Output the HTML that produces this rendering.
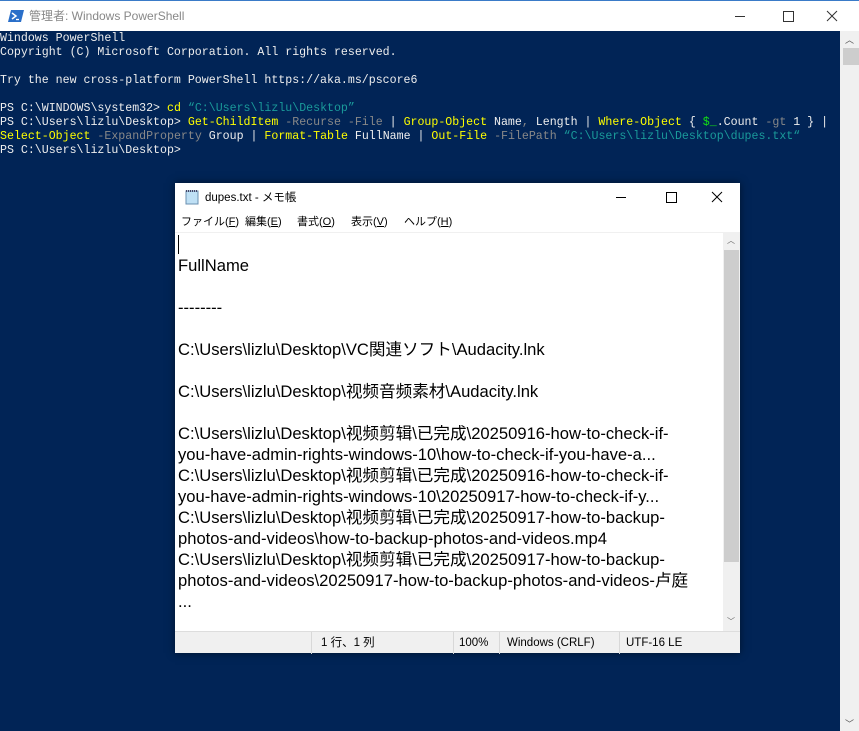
<!DOCTYPE html>
<html><head><meta charset="utf-8"><style>
*{margin:0;padding:0;box-sizing:border-box}
body{width:859px;height:731px;overflow:hidden;background:#012456;position:relative;font-family:"Liberation Sans","Noto Sans CJK JP",sans-serif}
#tb{position:absolute;left:0;top:0;width:859px;height:31px;background:#fff;border-top:1px solid #3a7bc8}
#tb .t{position:absolute;left:29px;top:8px;font-size:12px;line-height:15px;color:#888;white-space:nowrap}
#con{position:absolute;left:0;top:31px;width:840px;height:700px;font-family:"Liberation Mono","Noto Sans CJK JP",monospace;font-size:11.6px;line-height:14px;color:#eee;white-space:pre;padding-top:1px}
.y{color:#ffff00}.g{color:#888}.c{color:#1a9a9a}.gr{color:#13e013}
#sb{position:absolute;left:840px;top:31px;width:19px;height:700px;background:#f0f0f0}
#np{position:absolute;left:175px;top:183px;width:565px;height:470px;background:#fff;box-shadow:0 0 8px rgba(0,0,0,.5)}
#np .tt{position:absolute;left:30px;top:8px;font-size:11.5px;line-height:14px;color:#000;white-space:nowrap}
#menu{position:absolute;left:0;top:28px;width:565px;height:21px;font-size:11px;color:#000;white-space:nowrap}
#menu span{position:absolute;top:5px;line-height:13px}
#txt{position:absolute;left:0;top:49px;width:548px;height:399px;background:#fff;border-top:1px solid #f0f0f0;font-size:16.6px;line-height:21px;color:#000;padding-left:3px;padding-top:1px;white-space:pre;overflow:hidden}
#vs{position:absolute;left:548px;top:49px;width:17px;height:399px;background:#f0f0f0}
#st{position:absolute;left:0;top:448px;width:565px;height:22px;background:#f0f0f0;border-top:1px solid #ddd;font-size:11.5px;color:#000;white-space:nowrap}
#st span{position:absolute;top:4px;line-height:14px;height:14px}
#st i{position:absolute;top:0;width:1px;height:22px;background:#d8d8d8}
</style></head><body>
<div id="tb">
<svg style="position:absolute;left:8px;top:8px" width="16" height="14"><polygon points="3,1 16,1 13,13 0,13" fill="#2a6fc9"/><path d="M4,4 L8,7 L4,10" stroke="#fff" stroke-width="1.5" fill="none"/><path d="M8,10.5 H11" stroke="#fff" stroke-width="1.3"/></svg>
<span class="t">管理者: Windows PowerShell</span>
<svg style="position:absolute;left:735px;top:8px" width="110" height="16"><path d="M0,7.5 H10" stroke="#333"/><rect x="48.5" y="2.5" width="10" height="10" stroke="#333" fill="none"/><path d="M92,2 L102,12 M102,2 L92,12" stroke="#333"/></svg>
</div>
<div id="con">Windows PowerShell
Copyright (C) Microsoft Corporation. All rights reserved.

Try the new cross-platform PowerShell https://aka.ms/pscore6

PS C:\WINDOWS\system32&gt; <span class="y">cd</span> <span class="c">“C:\Users\lizlu\Desktop”</span>
PS C:\Users\lizlu\Desktop&gt; <span class="y">Get-ChildItem</span> <span class="g">-Recurse -File</span> | <span class="y">Group-Object</span> Name<span class="g">,</span> Length | <span class="y">Where-Object</span> { <span class="gr">$_</span>.Count <span class="g">-gt</span> 1 } |
<span class="y">Select-Object</span> <span class="g">-ExpandProperty</span> Group | <span class="y">Format-Table</span> FullName | <span class="y">Out-File</span> <span class="g">-FilePath</span> <span class="c">“C:\Users\lizlu\Desktop\dupes.txt“</span>
PS C:\Users\lizlu\Desktop&gt;</div>
<div id="sb"><div style="position:absolute;left:3px;top:17px;width:16px;height:17px;background:#cdcdcd"></div><span style="position:absolute;left:5px;top:2px;font-size:9px;color:#555">︿</span><span style="position:absolute;left:5px;top:686px;font-size:9px;color:#555">﹀</span></div>
<div id="np">
<svg style="position:absolute;left:9px;top:6px" width="16" height="16"><rect x="2" y="2" width="12" height="13" fill="#bfe0f5" stroke="#6a8fb0"/><path d="M2,2 H14" stroke="#446" stroke-width="2" stroke-dasharray="1 1"/></svg>
<span class="tt">dupes.txt - メモ帳</span>
<svg style="position:absolute;left:440px;top:8px" width="110" height="14"><path d="M1,6.5 H11" stroke="#000"/><rect x="51.5" y="1.5" width="10" height="10" stroke="#000" fill="none"/><path d="M97,1 L107,11 M107,1 L97,11" stroke="#000"/></svg>
<div id="menu"><span style="left:6px">ファイル(<u>F</u>)</span><span style="left:70px">編集(<u>E</u>)</span><span style="left:122px">書式(<u>O</u>)</span><span style="left:176px">表示(<u>V</u>)</span><span style="left:229px">ヘルプ(<u>H</u>)</span></div>
<div id="txt"><span style="border-left:1px solid #000"> </span>
FullName

--------

C:\Users\lizlu\Desktop\VC関連ソフト\Audacity.lnk

C:\Users\lizlu\Desktop\视频音频素材\Audacity.lnk

C:\Users\lizlu\Desktop\视频剪辑\已完成\20250916-how-to-check-if-
you-have-admin-rights-windows-10\how-to-check-if-you-have-a...
C:\Users\lizlu\Desktop\视频剪辑\已完成\20250916-how-to-check-if-
you-have-admin-rights-windows-10\20250917-how-to-check-if-y...
C:\Users\lizlu\Desktop\视频剪辑\已完成\20250917-how-to-backup-
photos-and-videos\how-to-backup-photos-and-videos.mp4
C:\Users\lizlu\Desktop\视频剪辑\已完成\20250917-how-to-backup-
photos-and-videos\20250917-how-to-backup-photos-and-videos-卢庭
...</div>
<div id="vs"><div style="position:absolute;left:1px;top:18px;width:15px;height:312px;background:#cdcdcd"></div><span style="position:absolute;left:4px;top:3px;font-size:8px;color:#666">︿</span><span style="position:absolute;left:4px;top:384px;font-size:8px;color:#666">﹀</span></div>
<div id="st"><i style="left:136px"></i><span style="left:146px">1 行、1 列</span><i style="left:278px"></i><span style="left:284px">100%</span><i style="left:324px"></i><span style="left:332px">Windows (CRLF)</span><i style="left:444px"></i><span style="left:451px">UTF-16 LE</span></div>
</div>
</body></html>
